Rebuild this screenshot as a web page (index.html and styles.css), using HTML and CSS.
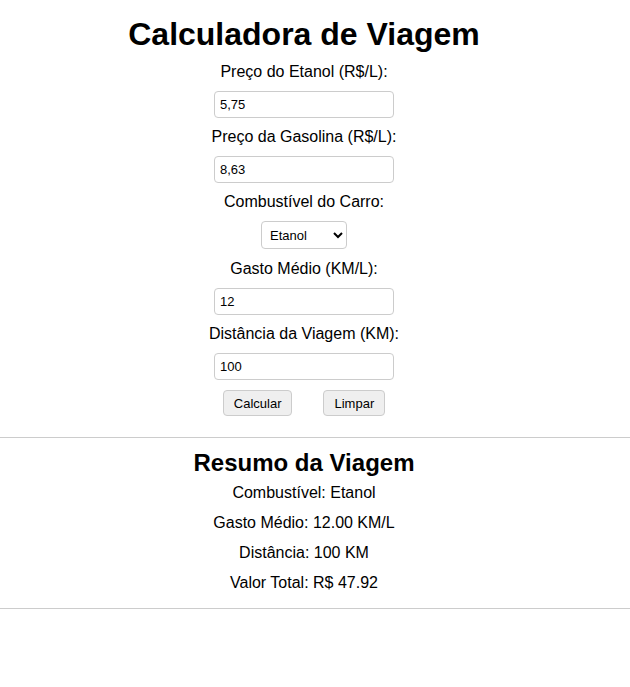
FILE: index.html
```html
<!DOCTYPE html>
<html lang="pt-BR">
<head>
<meta charset="utf-8">
<title>Calculadora de Viagem</title>
<link rel="stylesheet" href="styles.css">
</head>
<body>
<div class="container">
  <h1 class="title">Calculadora de Viagem</h1>
  <form class="form">
    <label class="label" for="etanol">Preço do Etanol (R$/L):</label>
    <input class="field" id="etanol" type="text" value="5,75">
    <label class="label" for="gasolina">Preço da Gasolina (R$/L):</label>
    <input class="field" id="gasolina" type="text" value="8,63">
    <label class="label" for="comb">Combustível do Carro:</label>
    <select class="select" id="comb">
      <option>Etanol</option>
      <option>Gasolina</option>
    </select>
    <label class="label" for="gasto">Gasto Médio (KM/L):</label>
    <input class="field" id="gasto" type="text" value="12">
    <label class="label" for="dist">Distância da Viagem (KM):</label>
    <input class="field" id="dist" type="text" value="100">
    <div class="actions">
      <button class="btn" type="button">Calcular</button>
      <button class="btn" type="button">Limpar</button>
    </div>
  </form>
</div>
<hr class="rule">
<div class="container summary">
  <h2 class="subtitle">Resumo da Viagem</h2>
  <p class="line">Combustível: Etanol</p>
  <p class="line">Gasto Médio: 12.00 KM/L</p>
  <p class="line">Distância: 100 KM</p>
  <p class="line">Valor Total: R$ 47.92</p>
</div>
<hr class="rule">
</body>
</html>
```
FILE: styles.css
```css
html, body {
  margin: 0;
  padding: 0;
  background: #fff;
}
body {
  font-family: "Liberation Sans", Arial, sans-serif;
  font-size: 16px;
  color: #000;
}
.container {
  width: 608px;
  text-align: center;
}
.title {
  margin: 0;
  padding-top: 16px;
  margin-bottom: 10px;
  font-size: 32px;
  font-weight: bold;
  line-height: 37px;
}
.form {
  display: flex;
  flex-direction: column;
  align-items: center;
  padding-bottom: 21px;
}
.label {
  display: block;
  line-height: 18px;
  margin-bottom: 10px;
}
.field {
  box-sizing: border-box;
  width: 180px;
  height: 27px;
  margin: 0 0 10px;
  padding: 0 5px;
  border: 1px solid #ccc;
  border-radius: 4px;
  font-family: "Liberation Sans", Arial, sans-serif;
  font-size: 13px;
  color: #000;
  background: #fff;
}
.select {
  box-sizing: border-box;
  width: 86px;
  height: 28px;
  margin: 0 0 11px;
  padding: 0 4px;
  border: 1px solid #ccc;
  border-radius: 4px;
  font-family: "Liberation Sans", Arial, sans-serif;
  font-size: 13px;
  color: #000;
  background: #fff;
}
.actions {
  display: flex;
  justify-content: center;
  gap: 31px;
}
.btn {
  box-sizing: border-box;
  height: 26px;
  padding: 0 10px;
  border: 1px solid #ccc;
  border-radius: 4px;
  background: #efefef;
  font-family: "Liberation Sans", Arial, sans-serif;
  font-size: 13px;
  color: #000;
}
.rule {
  margin: 0;
  border: 0;
  border-top: 1px solid #ccc;
  height: 0;
}
.summary {
  padding-top: 11px;
  padding-bottom: 16px;
}
.subtitle {
  margin: 0 0 7px;
  font-size: 24px;
  font-weight: bold;
  line-height: 28px;
}
.line {
  margin: 0 0 12px;
  line-height: 18px;
}
.line:last-child {
  margin-bottom: 0;
}
```
